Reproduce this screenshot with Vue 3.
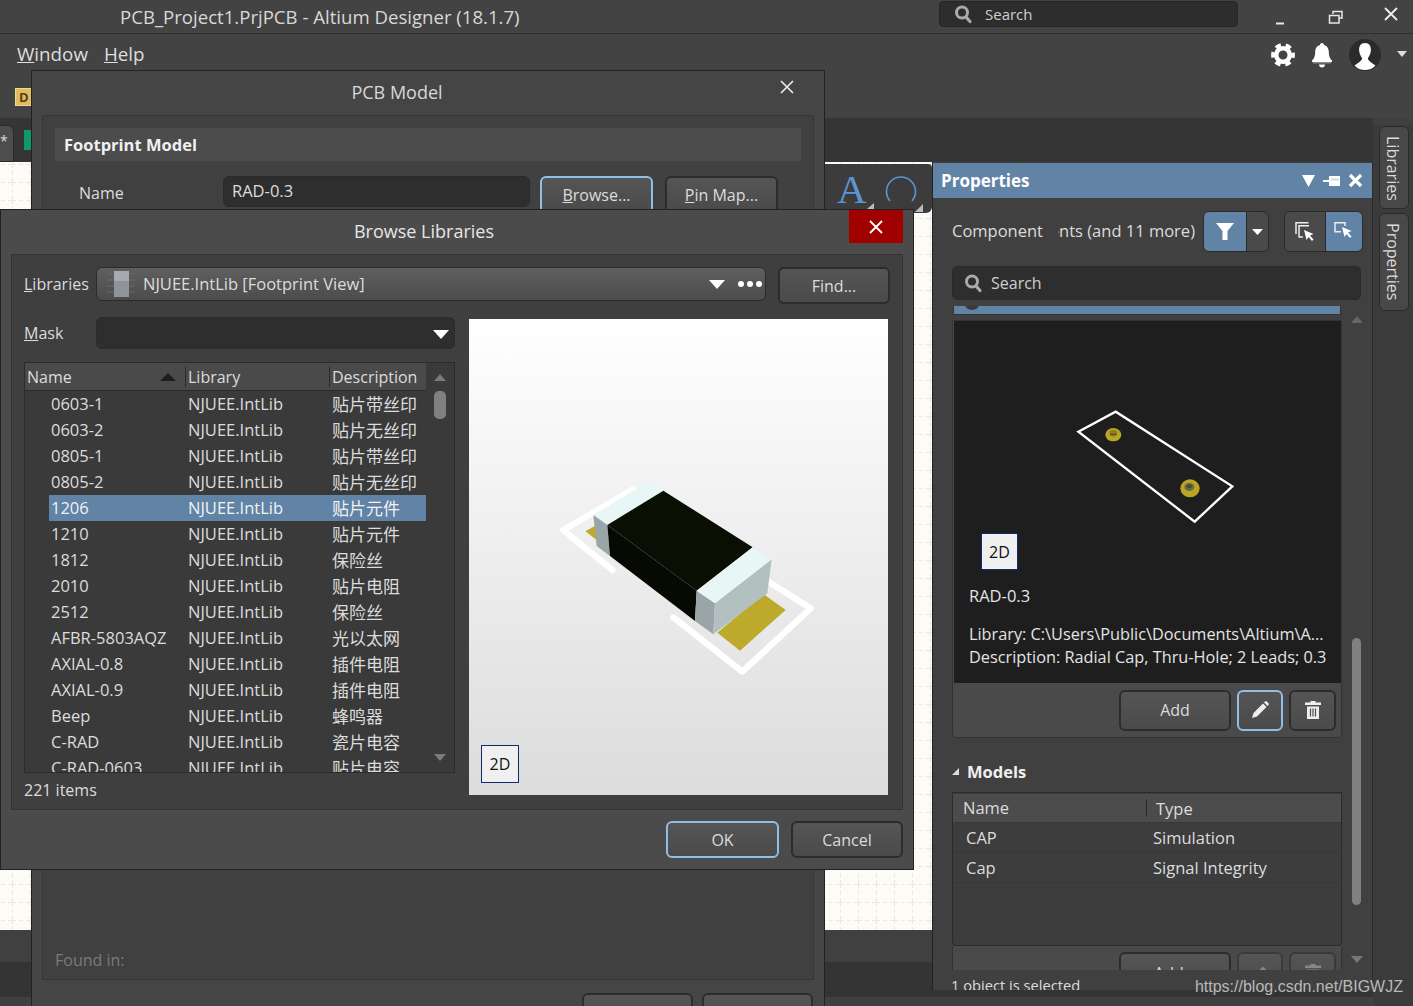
<template>
  <div class="app">
    <!-- title bar -->
    <div class="titlebar">
      <span class="app-title">PCB_Project1.PrjPCB - Altium Designer (18.1.7)</span>
      <div class="top-search">
        <svg class="search-icon" width="20" height="20" viewBox="0 0 20 20"><circle cx="9" cy="8.5" r="5.5" fill="none" stroke="#aaa" stroke-width="3"/><path d="M13 13l4 4.500" stroke="#aaa" stroke-width="3.2" stroke-linecap="round"/></svg>
        <span>Search</span>
      </div>
      <div class="win-btns">
        <svg width="16" height="16" viewBox="0 0 16 16"><path d="M4 13.500h8" stroke="#e8e8e8" stroke-width="2"/></svg>
        <svg width="16" height="16" viewBox="0 0 16 16"><path d="M5 4V1.500h9V8h-3M1.500 5.500h9.500V13H1.500z" fill="none" stroke="#e8e8e8" stroke-width="1.500"/></svg>
        <svg class="win-close" width="16" height="16" viewBox="0 0 16 16"><path d="M2 2l12 12M14 2L2 14" stroke="#eee" stroke-width="1.800"/></svg>
      </div>
    </div>

    <!-- menu + toolbar -->
    <div class="menubar">
      <div class="menu-row">
        <span class="menu-item"><u>W</u>indow</span>
        <span class="menu-item"><u>H</u>elp</span>
        <div class="menu-icons">
          <svg width="24" height="24" viewBox="0 0 24 24"><circle cx="12" cy="12" r="6.800" fill="none" stroke="#fff" stroke-width="4.600"/><circle cx="12" cy="12" r="10" fill="none" stroke="#fff" stroke-width="3.800" stroke-dasharray="5.500 4.970" stroke-dashoffset="2.750"/></svg>
          <svg width="20" height="25" viewBox="0 0 20 25"><path d="M10 0c1.500 0 2 1 2 2 3.500 1 4.800 3.800 4.800 7 0 4 1 6.500 3.200 8.500V19H0v-1.500C2.200 15.500 3.200 13 3.200 9c0-3.200 1.300-6 4.800-7 0-1 .5-2 2-2z" fill="#fff"/><path d="M1 19.800h18" stroke="#aaa" stroke-width="1"/><path d="M7 21.500h6c0 1.800-1.300 3-3 3s-3-1.200-3-3z" fill="#fff"/></svg>
          <svg width="32" height="32" viewBox="0 0 32 32"><circle cx="16" cy="16" r="16" fill="#2b2b2b"/><path d="M16 4c4.300 0 6.300 3.500 5.800 8-.3 3-1.800 5.500-2.800 7-.2 2 1 3 7.500 7.500-2.600 3-6.400 4.500-10.500 4.500s-7.900-1.500-10.500-4.500C12 22 13.200 21 13 19c-1-1.500-2.500-4-2.800-7-.5-4.500 1.500-8 5.800-8z" fill="#fff"/></svg>
          <svg class="caret" width="10" height="6" viewBox="0 0 10 6"><path d="M0 0h10L5 6z" fill="#ddd"/></svg>
        </div>
      </div>
      <div class="toolbar-row"><span class="doc-badge">D</span></div>
    </div>

    <div class="workspace">
      <div class="center">
        <div class="tabstrip">
          <div class="doc-tab">*</div>
          <span class="doc-icon"></span>
        </div>
        <div class="body">
          <div class="left-col">
            <div class="canvas">
              <svg class="grid" width="100%" height="100%">
                <defs>
                  <pattern id="grid" width="18" height="18" patternUnits="userSpaceOnUse" x="12" y="2">
                    <path d="M0 .5h18M.5 0v18" stroke="#ebe8e2" stroke-width="1" stroke-dasharray="4 3" fill="none"/>
                  </pattern>
                </defs>
                <rect width="100%" height="100%" fill="url(#grid)"/>
              </svg>
              <!-- floating place toolbar -->
              <div class="float-tools">
                <span class="tool-a">A</span>
                <svg class="tool-arc" width="32" height="30" viewBox="0 0 32 30"><path d="M5 25A14.500 14.500 0 1 1 27 25" fill="none" stroke="#5b95d6" stroke-width="1.600"/></svg>
                <svg class="tool-mark mark-a" width="7" height="6" viewBox="0 0 7 6"><path d="M7 0v6H0z" fill="#bbb"/></svg>
                <svg class="tool-mark mark-b" width="8" height="8" viewBox="0 0 8 8"><path d="M8 0v8H0z" fill="#bbb"/></svg>
              </div>
            </div>
            <div class="canvas-foot"></div>
            <div class="canvas-foot dark"></div>
          </div>

          <!-- properties panel -->
          <div class="panel">
            <div class="panel-head">
              <span>Properties</span>
              <div class="panel-head-icons">
                <svg width="13" height="12" viewBox="0 0 13 12"><path d="M0 0h13L6.500 12z" fill="#fff"/></svg>
                <svg width="17" height="10" viewBox="0 0 17 10"><path d="M0 4h6v2H0zM6 0h1.500v10H6zM7 0h10v10H7z" fill="#fff"/><path d="M8 2.500h8v2H8z" fill="#cfdbe6"/></svg>
                <svg width="15" height="15" viewBox="0 0 15 15"><path d="M2 2l11 11M13 2L2 13" stroke="#fff" stroke-width="3.2"/></svg>
              </div>
            </div>
            <div class="filter-row">
              <span class="comp-label">Component</span>
              <div class="comp-clip"><span>ents (and 11 more)</span></div>
              <div class="btn-group">
                <span class="seg seg-filter active">
                  <svg width="18" height="17" viewBox="0 0 18 17"><path d="M0 0h18l-6.500 8v9h-5V8z" fill="#fff"/></svg>
                </span>
                <span class="seg seg-drop">
                  <svg width="11" height="6" viewBox="0 0 11 6"><path d="M0 0h11L5.500 6z" fill="#fff"/></svg>
                </span>
              </div>
              <div class="btn-group second">
                <span class="seg seg-sel">
                  <svg width="20" height="20" viewBox="0 0 20 20"><path d="M1 12V.8h12.500M4 15.500V3.800h10M4 15h4" fill="none" stroke="#eee" stroke-width="1.500"/><path d="M9 8l9.500 4-3.500 1.500 3.500 4-1.500 1.500-3.500-4L11.500 18z" fill="#fff"/></svg>
                </span>
                <span class="seg seg-sel2 active">
                  <svg width="20" height="20" viewBox="0 0 20 20"><path d="M11 4V.8H1v9h6" fill="none" stroke="#eee" stroke-width="1.500"/><path d="M8 5l9.500 4-3.500 1.500 3.500 4-1.500 1.500-3.500-4L10.500 15z" fill="#fff"/></svg>
                </span>
              </div>
            </div>
            <div class="panel-search">
              <svg width="20" height="20" viewBox="0 0 20 20"><circle cx="9" cy="8.5" r="5.5" fill="none" stroke="#aaa" stroke-width="3"/><path d="M13 13l4 4.500" stroke="#aaa" stroke-width="3.2" stroke-linecap="round"/></svg>
              <span>Search</span>
            </div>

            <div class="panel-scroll">
              <div class="sections">
                <div class="blue-strip"><i></i></div>
                <div class="fp-box">
                  <div class="fp-view">
                    <svg class="fp-draw" width="240" height="130" viewBox="0 0 720 390">
                      <g transform="translate(-370 -30)">
                        <path d="M413 128L525 68 875 292 762 398z" fill="none" stroke="#fff" stroke-width="7"/>
                        <ellipse cx="518" cy="137" rx="24" ry="20" fill="#b9a625"/>
                        <ellipse cx="518" cy="133" rx="12" ry="10" fill="#8c7e1f"/>
                        <path d="M509 136h18" stroke="#2b2710" stroke-width="2"/>
                        <ellipse cx="748" cy="298" rx="29" ry="27" fill="#b9a625"/>
                        <ellipse cx="746" cy="294" rx="15" ry="12" fill="#6b6a40"/>
                        <ellipse cx="746" cy="292" rx="8" ry="6" fill="#4d4b33"/>
                      </g>
                    </svg>
                    <span class="btn-2d light">2D</span>
                    <div class="fp-name">RAD-0.3</div>
                    <div class="fp-desc">Library: C:\Users\Public\Documents\Altium\A...</div>
                    <div class="fp-desc">Description: Radial Cap, Thru-Hole; 2 Leads; 0.3</div>
                  </div>
                  <div class="fp-actions">
                    <button class="btn add-btn">Add</button>
                    <button class="btn icon-btn pen focus">
                      <svg width="20" height="20" viewBox="0 0 20 20"><path d="M2 18l1.500-5L13 3.500l3.500 3.500L7 16.500zM14 2.500l1-1c.6-.5 1.300-.5 1.800 0l1.700 1.700c.5.500.5 1.200 0 1.800l-1 1z" fill="#eee"/></svg>
                    </button>
                    <button class="btn icon-btn">
                      <svg width="18" height="20" viewBox="0 0 18 20"><path d="M6.500 2.500V1h5v1.500H17V5H1V2.500zM3 6.500h12V19H3z" fill="#eee"/><path d="M6.500 8.500v8M9 8.500v8M11.500 8.500v8" stroke="#4c4c4c" stroke-width="1.200"/></svg>
                    </button>
                  </div>
                </div>

                <div class="models-head"><i class="tri"></i>Models</div>
                <div class="models-table">
                  <div class="models-hdr"><span class="m-name">Name</span><span class="m-type">Type</span></div>
                  <div v-for="m in models" :key="m.type" class="models-row">
                    <span class="m-cell-name">{{ m.name }}</span><span>{{ m.type }}</span>
                  </div>
                </div>
                <div class="fp-actions models-actions">
                  <button class="btn add-btn">Add ▾</button>
                  <button class="btn icon-btn pen dim">
                    <svg width="20" height="20" viewBox="0 0 20 20"><path d="M2 18l1.500-5L13 3.500l3.500 3.500L7 16.500z" fill="#888"/></svg>
                  </button>
                  <button class="btn icon-btn dim">
                    <svg width="18" height="20" viewBox="0 0 18 20"><path d="M6.500 2.500V1h5v1.500H17V5H1V2.500zM3 6.500h12V19H3z" fill="#888"/></svg>
                  </button>
                </div>
              </div>
              <div class="panel-bar">
                <svg width="12" height="7" viewBox="0 0 12 7"><path d="M0 7h12L6 0z" fill="#666"/></svg>
                <div class="panel-thumb"></div>
                <svg width="12" height="7" viewBox="0 0 12 7"><path d="M0 0h12L6 7z" fill="#777"/></svg>
              </div>
            </div>
            <div class="panel-status">1 object is selected</div>
          </div>
        </div>
        <div class="foot-strip"></div>
      </div>

      <div class="side-tabs">
        <div class="side-tab libs">Libraries</div>
        <div class="side-tab">Properties</div>
      </div>
    </div>

    <!-- PCB Model dialog behind -->
    <div class="dlg pcb-dlg">
      <div class="dlg-title pcb-title">PCB Model</div>
      <svg class="dlg-x" width="16" height="16" viewBox="0 0 16 16"><path d="M2 2l12 12M14 2L2 14" stroke="#eee" stroke-width="1.600"/></svg>
      <div class="pcb-inner">
        <div class="pcb-head">Footprint Model</div>
        <div class="pcb-name-row">
          <span class="pcb-label">Name</span>
          <div class="pcb-input">RAD-0.3</div>
          <button class="btn pcb-btn focus"><u>B</u>rowse...</button>
          <button class="btn pcb-btn"><u>P</u>in Map...</button>
        </div>
        <div class="found-in">Found in:</div>
      </div>
      <div class="pcb-foot">
        <button class="btn pcb-foot-btn"></button>
        <button class="btn pcb-foot-btn"></button>
      </div>
    </div>

    <!-- Browse Libraries dialog on top -->
    <div class="dlg browse-dlg">
      <div class="dlg-title browse-title">Browse Libraries</div>
      <div class="dlg-close">
        <svg width="16" height="16" viewBox="0 0 16 16"><path d="M2 2l12 12M14 2L2 14" stroke="#fff" stroke-width="1.800"/></svg>
      </div>
      <div class="browse-inner">
        <div class="lib-row">
          <span class="lib-label"><u>L</u>ibraries</span>
          <div class="combo lib-combo">
            <svg class="chip" width="30" height="30" viewBox="0 0 30 30"><path d="M1 5h28M1 11h28M1 17h28M1 23h28" stroke="#6a6a6a" stroke-width="1.200"/><rect x="8" y="2" width="15" height="26" fill="#8e939c"/><rect x="8" y="2" width="15" height="10" fill="#b5b8bd" opacity=".6"/></svg>
            <span class="combo-text">NJUEE.IntLib [Footprint View]</span>
            <svg class="combo-arrow" width="16" height="9" viewBox="0 0 16 9"><path d="M0 0h16L8 9z" fill="#fff"/></svg>
            <span class="dots"><i></i><i></i><i></i></span>
          </div>
          <button class="btn find-btn">Find...</button>
        </div>
        <div class="browse-main">
          <div class="browse-left">
            <div class="mask-row">
              <span class="lib-label"><u>M</u>ask</span>
              <div class="combo mask-combo">
                <svg class="combo-arrow" width="16" height="9" viewBox="0 0 16 9"><path d="M0 0h16L8 9z" fill="#fff"/></svg>
              </div>
            </div>
            <div class="list">
              <div class="list-body">
                <div class="list-head">
                  <span class="lh lh-name">Name<i class="sort"></i></span>
                  <span class="lh lh-lib">Library</span>
                  <span class="lh lh-desc">Description</span>
                </div>
                <div class="list-rows">
                  <div v-for="r in rows" :key="r.name" :class="['list-row', { selected: r.name === '1206' }]">
                    <span class="c-name">{{ r.name }}</span>
                    <span class="c-lib">NJUEE.IntLib</span>
                    <span class="c-desc">{{ r.desc }}</span>
                  </div>
                </div>
              </div>
              <div class="list-bar">
                <svg width="12" height="7" viewBox="0 0 12 7"><path d="M0 7h12L6 0z" fill="#7a7a7a"/></svg>
                <div class="list-thumb"></div>
                <svg class="bar-down" width="12" height="7" viewBox="0 0 12 7"><path d="M0 0h12L6 7z" fill="#7a7a7a"/></svg>
              </div>
            </div>
            <div class="item-count">221 items</div>
          </div>
          <div class="preview">
            <svg class="chip3d" width="419" height="476" viewBox="469 319 419 476">
              <g transform="translate(480 440) scale(.33333)">
                <path d="M460 148L250 270 397 390" fill="none" stroke="#fff" stroke-width="19" stroke-linecap="round" stroke-linejoin="round"/>
                <path d="M580 532L787 695 992 505 865 425" fill="none" stroke="#fff" stroke-width="19" stroke-linecap="round" stroke-linejoin="round"/>
                <polygon points="316,274 345,258 350,300" fill="#bda92a"/>
                <polygon points="850,462 917,510 780,632 712,578" fill="#bda92a"/>
                <polygon points="340,225 505,125 550,152 382,255" fill="#e8f6f6"/>
                <polygon points="340,225 382,255 390,348 350,318" fill="#9aa5a8"/>
                <polygon points="382,255 650,452 645,543 390,348" fill="#060a02"/>
                <polygon points="382,255 550,152 818,322 650,452" fill="#0a0f04"/>
                <polygon points="650,452 705,490 700,583 645,543" fill="#9ba5a7"/>
                <polygon points="705,490 875,358 862,460 700,583" fill="#b3c0c0"/>
                <polygon points="650,452 818,322 875,358 705,490" fill="#e8f6f6"/>
              </g>
            </svg>
            <span class="btn-2d">2D</span>
          </div>
        </div>
      </div>
      <div class="browse-foot">
        <button class="btn foot-btn focus">OK</button>
        <button class="btn foot-btn cancel">Cancel</button>
      </div>
    </div>

    <div class="watermark">https://blog.csdn.net/BIGWJZ</div>
  </div>
</template>

<script setup>
import { ref } from 'vue';

// footprint list of the library browser
const rows = ref([
  { name: '0603-1', desc: '贴片带丝印' },
  { name: '0603-2', desc: '贴片无丝印' },
  { name: '0805-1', desc: '贴片带丝印' },
  { name: '0805-2', desc: '贴片无丝印' },
  { name: '1206', desc: '贴片元件' },
  { name: '1210', desc: '贴片元件' },
  { name: '1812', desc: '保险丝' },
  { name: '2010', desc: '贴片电阻' },
  { name: '2512', desc: '保险丝' },
  { name: 'AFBR-5803AQZ', desc: '光以太网' },
  { name: 'AXIAL-0.8', desc: '插件电阻' },
  { name: 'AXIAL-0.9', desc: '插件电阻' },
  { name: 'Beep', desc: '蜂鸣器' },
  { name: 'C-RAD', desc: '瓷片电容' },
  { name: 'C-RAD-0603', desc: '贴片电容' }
]);

const models = ref([
  { name: 'CAP', type: 'Simulation' },
  { name: 'Cap', type: 'Signal Integrity' }
]);
</script>

<style>
html, body {
  margin: 0;
  background: #404040;
}
</style>

<style scoped>
.app {
  position: relative;
  width: 1413px;
  height: 1006px;
  overflow: hidden;
  display: flex;
  flex-direction: column;
  background: #404040;
  color: #dcdcdc;
  font-family: "Open Sans", "Noto Sans CJK SC", sans-serif;
  font-size: 16px;
}

.titlebar {
  height: 33px;
  flex: none;
  display: flex;
  align-items: center;
  background: #434343;
  border-bottom: 1px solid #2e2e2e;
}

.app-title {
  margin-left: 120px;
  font-size: 18.6px;
  color: #d8d8d8;
  white-space: nowrap;
}

.top-search {
  position: absolute;
  left: 939px;
  top: 1px;
  width: 299px;
  height: 26px;
  box-sizing: border-box;
  display: flex;
  align-items: center;
  gap: 12px;
  padding-left: 13px;
  background: #2d2d2d;
  border: 1px solid #262626;
  border-radius: 4px;
  font-size: 15px;
  color: #cfcfcf;
}

.win-btns {
  margin-left: auto;
  display: flex;
  gap: 39.5px;
  padding: 2px 14px 0 0;
}

.win-close {
  margin-top: -4px;
}

.menubar {
  height: 84px;
  flex: none;
  background: #434343;
}

.menu-row {
  height: 40px;
  display: flex;
  align-items: center;
  gap: 16px;
  padding-left: 17px;
}

.menu-item {
  font-size: 18.8px;
  color: #dedede;
}

.menu-icons {
  margin-left: auto;
  margin-top: 2px;
  display: flex;
  align-items: center;
  gap: 17px;
  padding-right: 6px;
}

.caret {
  margin-left: -1px;
  margin-top: -2px;
}

.toolbar-row {
  padding-left: 15px;
  padding-top: 14px;
}

.doc-badge {
  display: block;
  width: 17px;
  height: 18px;
  background: #e2bd5f;
  border: 1px solid #f2d888;
  box-sizing: border-box;
  color: #54421a;
  font-size: 13px;
  font-weight: 700;
  line-height: 16px;
  padding-left: 3px;
}

.workspace {
  flex: 1;
  min-height: 0;
  display: flex;
}

.center {
  flex: 1;
  min-width: 0;
  display: flex;
  flex-direction: column;
}

.tabstrip {
  height: 44px;
  flex: none;
  display: flex;
  background: #353535;
  padding-top: 7px;
  box-sizing: border-box;
}

.doc-tab {
  width: 14px;
  height: 37px;
  box-sizing: border-box;
  background: #4d4d4d;
  border: 1px solid #2b2b2b;
  border-left: none;
  border-radius: 0 6px 0 0;
  line-height: 30px;
  font-size: 14px;
  color: #ddd;
}

.doc-icon {
  width: 8px;
  height: 20px;
  margin: 5px 0 0 10px;
  background: #0f9a6e;
}

.body {
  height: 828px;
  flex: none;
  display: flex;
}

.left-col {
  width: 932px;
  flex: none;
  display: flex;
  flex-direction: column;
  background: #343434;
}

.canvas {
  position: relative;
  height: 768px;
  flex: none;
  background: #fdfbf6;
}

.grid {
  display: block;
}

.canvas-foot {
  height: 32px;
  flex: none;
  background: #404040;
}

.canvas-foot.dark {
  flex: 1;
  background: #343434;
}

.float-tools {
  position: absolute;
  left: 825px;
  top: 2px;
  width: 107px;
  height: 49px;
  background: #3c3c3c;
  border-radius: 0 4px 6px 0;
}

.tool-a {
  position: absolute;
  left: 12px;
  top: 2px;
  font-family: "Liberation Serif", serif;
  font-size: 41px;
  line-height: 46px;
  color: #5b95d6;
}

.tool-arc {
  position: absolute;
  left: 60px;
  top: 12px;
}

.tool-mark {
  position: absolute;
}

.mark-a {
  left: 42px;
  top: 39px;
}

.mark-b {
  left: 90px;
  top: 40px;
}

/* properties panel */
.panel {
  width: 441px;
  flex: none;
  box-sizing: border-box;
  display: flex;
  flex-direction: column;
  background: #404040;
  border-left: 1px solid #232323;
  border-right: 1px solid #2b2b2b;
  padding-top: 1px;
}

.panel-head {
  height: 35px;
  flex: none;
  display: flex;
  align-items: center;
  justify-content: space-between;
  padding: 0 9px 0 8px;
  background: #6083a6;
  color: #fff;
  font-weight: 700;
  font-size: 17px;
}

.panel-head-icons {
  display: flex;
  align-items: center;
  gap: 8px;
}

.filter-row {
  height: 41px;
  flex: none;
  margin-top: 13px;
  display: flex;
  align-items: center;
  padding-left: 19px;
  font-size: 16.5px;
}

.comp-label {
  width: 106px;
  flex: none;
  margin-bottom: 2px;
}

.comp-clip {
  width: 137px;
  flex: none;
  display: flex;
  justify-content: flex-end;
  overflow: hidden;
  white-space: nowrap;
  margin-bottom: 2px;
}

.comp-clip span {
  flex: none;
}

.btn-group {
  margin-left: 8px;
  height: 41px;
  box-sizing: border-box;
  display: flex;
  border: 1px solid #2b2b2b;
  border-radius: 6px;
  overflow: hidden;
  background: #4a4a4a;
}

.btn-group.second {
  margin-left: 15px;
}

.seg {
  display: flex;
  align-items: center;
  justify-content: center;
}

.seg.active {
  background: #6083a6;
}

.seg-filter {
  width: 42px;
  border-right: 1px solid #2b2b2b;
}

.seg-drop {
  width: 21px;
}

.seg-sel {
  width: 40px;
  border-right: 1px solid #2b2b2b;
}

.seg-sel2 {
  width: 36px;
}

.panel-search {
  margin: 14px 11px 0 19px;
  height: 34px;
  flex: none;
  box-sizing: border-box;
  display: flex;
  align-items: center;
  gap: 8px;
  padding-left: 10px;
  background: #2e2e2e;
  border: 1px solid #2a2a2a;
  border-radius: 5px;
  color: #cfcfcf;
}

.panel-scroll {
  position: relative;
  flex: 1;
  min-height: 0;
  margin-top: 6px;
  overflow: hidden;
  display: flex;
}

.sections {
  width: 390px;
  margin-left: 19px;
  flex: none;
}

.panel-bar {
  position: absolute;
  left: 419px;
  top: 10px;
  bottom: 7px;
  width: 10px;
}

.panel-bar svg {
  display: block;
  position: absolute;
  left: -1px;
}

.panel-bar svg:last-child {
  bottom: 0;
}

.panel-thumb {
  position: absolute;
  top: 322px;
  left: 0;
  width: 9px;
  height: 267px;
  border-radius: 5px;
  background: #808080;
}

.blue-strip {
  position: relative;
  height: 8px;
  overflow: hidden;
  background: #6083a6;
  border: 1px solid #333;
  border-top: none;
  margin: 0 1px;
}

.blue-strip i {
  position: absolute;
  left: 11px;
  top: -8px;
  width: 14px;
  height: 12px;
  border-radius: 50%;
  background: #3a3a3a;
}

.fp-box {
  margin-top: 5px;
  border: 1px solid #333;
  border-radius: 0 0 4px 4px;
  background: #4a4a4a;
}

.fp-view {
  position: relative;
  height: 362px;
  box-sizing: border-box;
  margin: 0 0 0 1px;
  padding: 232px 0 0 15px;
  background: #1e1e1e;
  color: #e4e4e4;
}

.fp-draw {
  position: absolute;
  left: 110px;
  top: 78px;
}

.btn-2d {
  position: absolute;
  left: 12px;
  bottom: 12px;
  width: 38px;
  height: 38px;
  box-sizing: border-box;
  display: flex;
  align-items: center;
  justify-content: center;
  background: #f0f0f0;
  border: 1px solid #0f2a6e;
  color: #111;
  font-size: 16px;
}

.btn-2d.light {
  left: 27px;
  top: 212px;
  bottom: auto;
  width: 37px;
  height: 37px;
}

.fp-name {
  margin-top: 31px;
  margin-bottom: 15px;
  line-height: 24px;
  font-size: 16.5px;
}

.fp-desc {
  line-height: 23px;
  white-space: nowrap;
  font-size: 16.3px;
}

.fp-actions {
  height: 54px;
  box-sizing: border-box;
  display: flex;
  align-items: center;
  justify-content: flex-end;
  gap: 6px;
  padding-right: 5px;
}

.btn {
  box-sizing: border-box;
  padding: 0;
  background: linear-gradient(#555, #4a4a4a);
  border: 2px solid #2c2c2c;
  border-radius: 6px;
  color: #dcdcdc;
  font-family: inherit;
  font-size: 16px;
}

.btn.focus {
  border-color: #8fbfe6;
}

.add-btn {
  width: 112px;
  height: 41px;
}

.icon-btn {
  width: 47px;
  height: 41px;
  display: flex;
  align-items: center;
  justify-content: center;
}

.icon-btn.pen {
  width: 46px;
}

.icon-btn.dim {
  border-color: #3a3a3a;
}

.models-head {
  margin-top: 21px;
  height: 24px;
  display: flex;
  align-items: center;
  font-weight: 700;
  font-size: 16.5px;
  color: #f0f0f0;
}

.tri {
  width: 0;
  height: 0;
  margin-right: 8px;
  border-left: 7px solid transparent;
  border-bottom: 7px solid #ddd;
}

.models-table {
  margin-top: 9px;
  height: 154px;
  box-sizing: border-box;
  border: 1px solid #2b2b2b;
  border-radius: 0 0 4px 4px;
  background: #3d3d3d;
  padding-top: 1px;
  font-size: 16.5px;
}

.models-hdr {
  height: 29px;
  display: flex;
  align-items: center;
  background: #4c4c4c;
  border-bottom: 1px solid #383838;
  box-sizing: border-box;
}

.m-name {
  width: 194px;
  padding-left: 10px;
  box-sizing: border-box;
  border-right: 1px solid #2b2b2b;
  line-height: 18px;
}

.m-type {
  padding-left: 9px;
}

.models-row {
  height: 30px;
  display: flex;
  align-items: center;
  border-bottom: 1px solid #383838;
  box-sizing: border-box;
}

.m-cell-name {
  width: 200px;
  padding-left: 13px;
  box-sizing: border-box;
}

.models-actions {
  align-items: flex-start;
  padding-top: 6px;
  background: #4a4a4a;
  border: 1px solid #333;
  border-top: none;
  overflow: hidden;
}

.panel-status {
  height: 20px;
  flex: none;
  padding-left: 18px;
  line-height: 30px;
  overflow: hidden;
  background: #404040;
  font-size: 14.7px;
}

.foot-strip {
  height: 7px;
  flex: none;
  background: #343434;
}

.side-tabs {
  width: 40px;
  margin-top: 7px;
  flex: none;
  background: #3b3b3b;
  padding: 1px 0 0 6px;
  box-sizing: border-box;
}

.side-tab {
  writing-mode: vertical-rl;
  width: 30px;
  height: 98px;
  box-sizing: border-box;
  padding: 9px 3px 0 0;
  margin-bottom: 4px;
  background: #484848;
  border: 1px solid #2b2b2b;
  border-radius: 6px;
  line-height: 25px;
  font-size: 16px;
  color: #dcdcdc;
}

.side-tab.libs {
  height: 83px;
}

/* dialogs */
.dlg {
  position: absolute;
  box-sizing: border-box;
  border: 1px solid #222;
  background: #454545;
}

.pcb-dlg {
  left: 31px;
  top: 70px;
  width: 794px;
  height: 960px;
  padding: 0 10px;
}

.dlg-title {
  height: 44px;
  line-height: 42px;
  text-align: center;
  font-size: 18px;
  color: #d8d8d8;
}

.pcb-title {
  padding-right: 62px;
}

.dlg-x {
  position: absolute;
  right: 29px;
  top: 8px;
}

.pcb-inner {
  position: relative;
  height: 865px;
  box-sizing: border-box;
  padding: 12px 12px 0;
  background: #404040;
  border: 1px solid #363636;
}

.pcb-head {
  height: 33px;
  line-height: 33px;
  padding-left: 9px;
  background: #4c4c4c;
  font-weight: 700;
  font-size: 16.5px;
  color: #f0f0f0;
}

.pcb-name-row {
  display: flex;
  margin-top: 15px;
}

.pcb-label {
  width: 168px;
  flex: none;
  padding-left: 24px;
  box-sizing: border-box;
  line-height: 34px;
}

.pcb-input {
  width: 307px;
  height: 31px;
  flex: none;
  box-sizing: border-box;
  margin-right: 10px;
  padding-left: 8px;
  line-height: 28px;
  background: #2e2e2e;
  border: 1px solid #2a2a2a;
  border-radius: 6px;
  font-size: 16.5px;
}

.pcb-btn {
  width: 113px;
  height: 38px;
  flex: none;
  margin-right: 12px;
}

.found-in {
  position: absolute;
  left: 12px;
  bottom: 8px;
  color: #7a7a7a;
}

.pcb-foot {
  display: flex;
  justify-content: flex-end;
  gap: 9px;
  margin-top: 13px;
  padding-right: 1px;
}

.pcb-foot-btn {
  width: 111px;
  height: 38px;
}

.browse-dlg {
  left: 0;
  top: 209px;
  width: 914px;
  height: 661px;
  padding: 0 10px;
  background: #4b4b4b;
}

.browse-title {
  padding-right: 66px;
  color: #e6e6e6;
}

.dlg-close {
  position: absolute;
  right: 10px;
  top: 0;
  width: 54px;
  height: 33px;
  display: flex;
  align-items: center;
  justify-content: center;
  background: #a00000;
}

.browse-inner {
  height: 556px;
  box-sizing: border-box;
  padding: 12px 12px 0;
  background: #3f3f3f;
  border: 1px solid #333;
}

.lib-row {
  display: flex;
  align-items: flex-start;
}

.lib-label {
  width: 72px;
  flex: none;
  line-height: 34px;
  color: #dcdcdc;
}

.combo {
  position: relative;
  display: flex;
  align-items: center;
  box-sizing: border-box;
  border: 1px solid #2b2b2b;
  border-radius: 6px;
}

.lib-combo {
  width: 670px;
  height: 34px;
  flex: none;
  background: linear-gradient(#5f5f5f, #4c4c4c);
  font-size: 16.5px;
}

.chip {
  margin-left: 9px;
  flex: none;
}

.combo-text {
  margin-left: 7px;
  margin-bottom: 2px;
}

.combo-arrow {
  position: absolute;
  top: 12px;
  right: 40px;
}

.mask-combo .combo-arrow {
  right: 5px;
}

.dots {
  position: absolute;
  right: 3px;
  top: 13px;
  display: flex;
  gap: 3px;
}

.dots i {
  width: 6px;
  height: 6px;
  border-radius: 50%;
  background: #fff;
}

.find-btn {
  width: 112px;
  height: 37px;
  margin-left: 12px;
  flex: none;
}

.browse-main {
  display: flex;
  margin-top: 13px;
}

.browse-left {
  width: 431px;
  flex: none;
}

.mask-row {
  display: flex;
  align-items: center;
  height: 32px;
}

.mask-combo {
  width: 359px;
  height: 32px;
  flex: none;
  background: #2e2e2e;
}

.list {
  margin-top: 13px;
  height: 411px;
  box-sizing: border-box;
  display: flex;
  border: 1px solid #2b2b2b;
  background: #3a3a3a;
}

.list-body {
  width: 401px;
  flex: none;
  overflow: hidden;
}

.list-head {
  height: 28px;
  display: flex;
  align-items: center;
  background: #4a4a4a;
  border-bottom: 1px solid #2b2b2b;
  box-sizing: border-box;
}

.lh {
  position: relative;
  height: 20px;
  line-height: 20px;
  box-sizing: border-box;
  flex: none;
}

.lh-name {
  width: 161px;
  padding-left: 2px;
  border-right: 1px solid #2b2b2b;
}

.sort {
  position: absolute;
  right: 9px;
  top: 6px;
  border-left: 8px solid transparent;
  border-right: 8px solid transparent;
  border-bottom: 8px solid #1f1f1f;
}

.lh-lib {
  width: 144px;
  padding-left: 2px;
  border-right: 1px solid #2b2b2b;
}

.lh-desc {
  padding-left: 2px;
}

.list-rows {
  height: 381px;
  overflow: hidden;
  font-size: 16.5px;
}

.list-row {
  height: 26px;
  display: flex;
  align-items: center;
  margin-left: 24px;
  padding-left: 2px;
}

.list-row.selected {
  background: #6083a6;
  color: #f2f2f2;
}

.c-name {
  width: 137px;
  flex: none;
  margin-bottom: 2px;
  white-space: nowrap;
}

.c-lib {
  width: 144px;
  flex: none;
  margin-bottom: 2px;
}

.c-desc {
  margin-bottom: 2px;
  font-size: 17px;
  white-space: nowrap;
}

.list-bar {
  position: relative;
  flex: 1;
}

.list-bar svg {
  position: absolute;
  left: 8px;
  top: 11px;
}

.list-bar .bar-down {
  top: auto;
  bottom: 11px;
}

.list-thumb {
  position: absolute;
  left: 8px;
  top: 28px;
  width: 12px;
  height: 28px;
  border-radius: 5px;
  background: #808080;
}

.item-count {
  margin-top: 6px;
  line-height: 22px;
}

.preview {
  position: relative;
  width: 419px;
  height: 476px;
  margin: 2px 0 0 14px;
  flex: none;
  overflow: hidden;
  background: linear-gradient(#fff, #dcdcdc);
}

.chip3d {
  display: block;
}

.browse-foot {
  display: flex;
  justify-content: flex-end;
  gap: 12px;
  padding-top: 11px;
}

.foot-btn {
  width: 113px;
  height: 37px;
}

.foot-btn.cancel {
  width: 112px;
}

.watermark {
  position: absolute;
  right: 10px;
  top: 977px;
  font-family: "Liberation Sans", sans-serif;
  font-size: 16px;
  line-height: 20px;
  color: #b9b9b9;
}
</style>
